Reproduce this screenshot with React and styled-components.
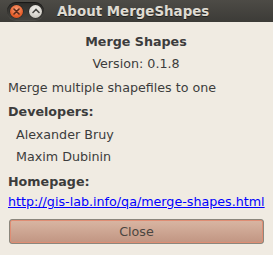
import React from "react";
import styled, { createGlobalStyle } from "styled-components";

const GlobalStyle = createGlobalStyle`
  html, body {
    margin: 0;
    padding: 0;
    background: #f0ebe2;
  }
  body {
    font-family: "DejaVu Sans", "Liberation Sans", sans-serif;
  }
`;

const App = () => {
  return (
    <>
      <GlobalStyle />
      <StyledWindow>
        <StyledTitleBar>
          <StyledControls>
            <StyledCircle kind="close">
              <svg width="7" height="7" viewBox="0 0 7 7">
                <path d="M1 1 L6 6 M6 1 L1 6" stroke="#5a2a1a" strokeWidth="1.6" strokeLinecap="round" />
              </svg>
            </StyledCircle>
            <StyledCircle>
              <svg width="8" height="6" viewBox="0 0 8 6">
                <path d="M1 4.5 L4 1.5 L7 4.5" stroke="#4a4945" strokeWidth="1.6" fill="none" strokeLinecap="round" />
              </svg>
            </StyledCircle>
          </StyledControls>
          <StyledTitle>About MergeShapes</StyledTitle>
        </StyledTitleBar>
        <StyledContent>
          <StyledRow center bold top={12}>Merge Shapes</StyledRow>
          <StyledRow center top={6}>Version: 0.1.8</StyledRow>
          <StyledRow top={8}>Merge multiple shapefiles to one</StyledRow>
          <StyledRow bold top={8}>Developers:</StyledRow>
          <StyledRow indent top={7}>Alexander Bruy</StyledRow>
          <StyledRow indent top={6}>Maxim Dubinin</StyledRow>
          <StyledRow bold top={9}>Homepage:</StyledRow>
          <StyledRow top={4}>
            <StyledLink href="#">http://gis-lab.info/qa/merge-shapes.html</StyledLink>
          </StyledRow>
          <StyledButton>
            <span>Close</span>
          </StyledButton>
        </StyledContent>
      </StyledWindow>
    </>
  );
};

export default App;

//styles

const StyledWindow = styled.div`
  width: 273px;
  height: 255px;
  background: #f0ebe2;
  overflow: hidden;
`;

const StyledTitleBar = styled.div`
  height: 22px;
  display: flex;
  align-items: center;
  background: linear-gradient(#4d4b46, #3c3b37);
`;

const StyledControls = styled.div`
  display: flex;
  align-items: center;
  gap: 6px;
  margin-left: 7px;
  padding: 1px 2px 1px 3px;
  height: 16px;
  border-radius: 9px;
  background: linear-gradient(#2e2d2a, #44433f);
  box-shadow: inset 0 1px 1px rgba(0, 0, 0, 0.5), 0 1px 0 rgba(255, 255, 255, 0.08);
`;

const StyledCircle = styled.div`
  width: 13px;
  height: 13px;
  border-radius: 50%;
  display: flex;
  align-items: center;
  justify-content: center;
  background: ${(props) =>
    props.kind === "close"
      ? "radial-gradient(circle at 50% 35%, #f9a07a, #e8602c 60%, #c8481a)"
      : "radial-gradient(circle at 50% 35%, #f4f2ee, #d6d3cc 60%, #b5b1a8)"};
  box-shadow: 0 0 0 0.5px rgba(0, 0, 0, 0.4);
`;

const StyledTitle = styled.div`
  margin-left: 13px;
  font-size: 13.4px;
  font-weight: bold;
  color: #dfdbd2;
  text-shadow: 0 1px 0 rgba(0, 0, 0, 0.5);
  white-space: nowrap;
`;

const StyledContent = styled.div`
  display: flex;
  flex-direction: column;
  padding: 0 9px 0 8px;
`;

const StyledRow = styled.div`
  font-size: 12.7px;
  line-height: 16px;
  color: #3c3c3c;
  white-space: nowrap;
  margin-top: ${(props) => props.top || 0}px;
  text-align: ${(props) => (props.center ? "center" : "left")};
  font-weight: ${(props) => (props.bold ? "bold" : "normal")};
  padding-left: ${(props) => (props.indent ? 8 : 0)}px;
`;

const StyledLink = styled.a`
  color: #0000ff;
  text-decoration: underline;
`;

const StyledButton = styled.button`
  margin-top: 9px;
  margin-left: 1px;
  height: 25px;
  width: 255px;
  padding: 0;
  border: 1px solid #8b877d;
  border-radius: 3px;
  background: #8b877d;
  font-family: "DejaVu Sans", "Liberation Sans", sans-serif;
  font-size: 12.7px;
  color: #4a4540;
  display: flex;

  span {
    flex: 1;
    display: flex;
    align-items: center;
    justify-content: center;
    border: 1px solid #df8d74;
    border-radius: 2px;
    background: linear-gradient(#d8b5a2, #c29683);
  }
`;
